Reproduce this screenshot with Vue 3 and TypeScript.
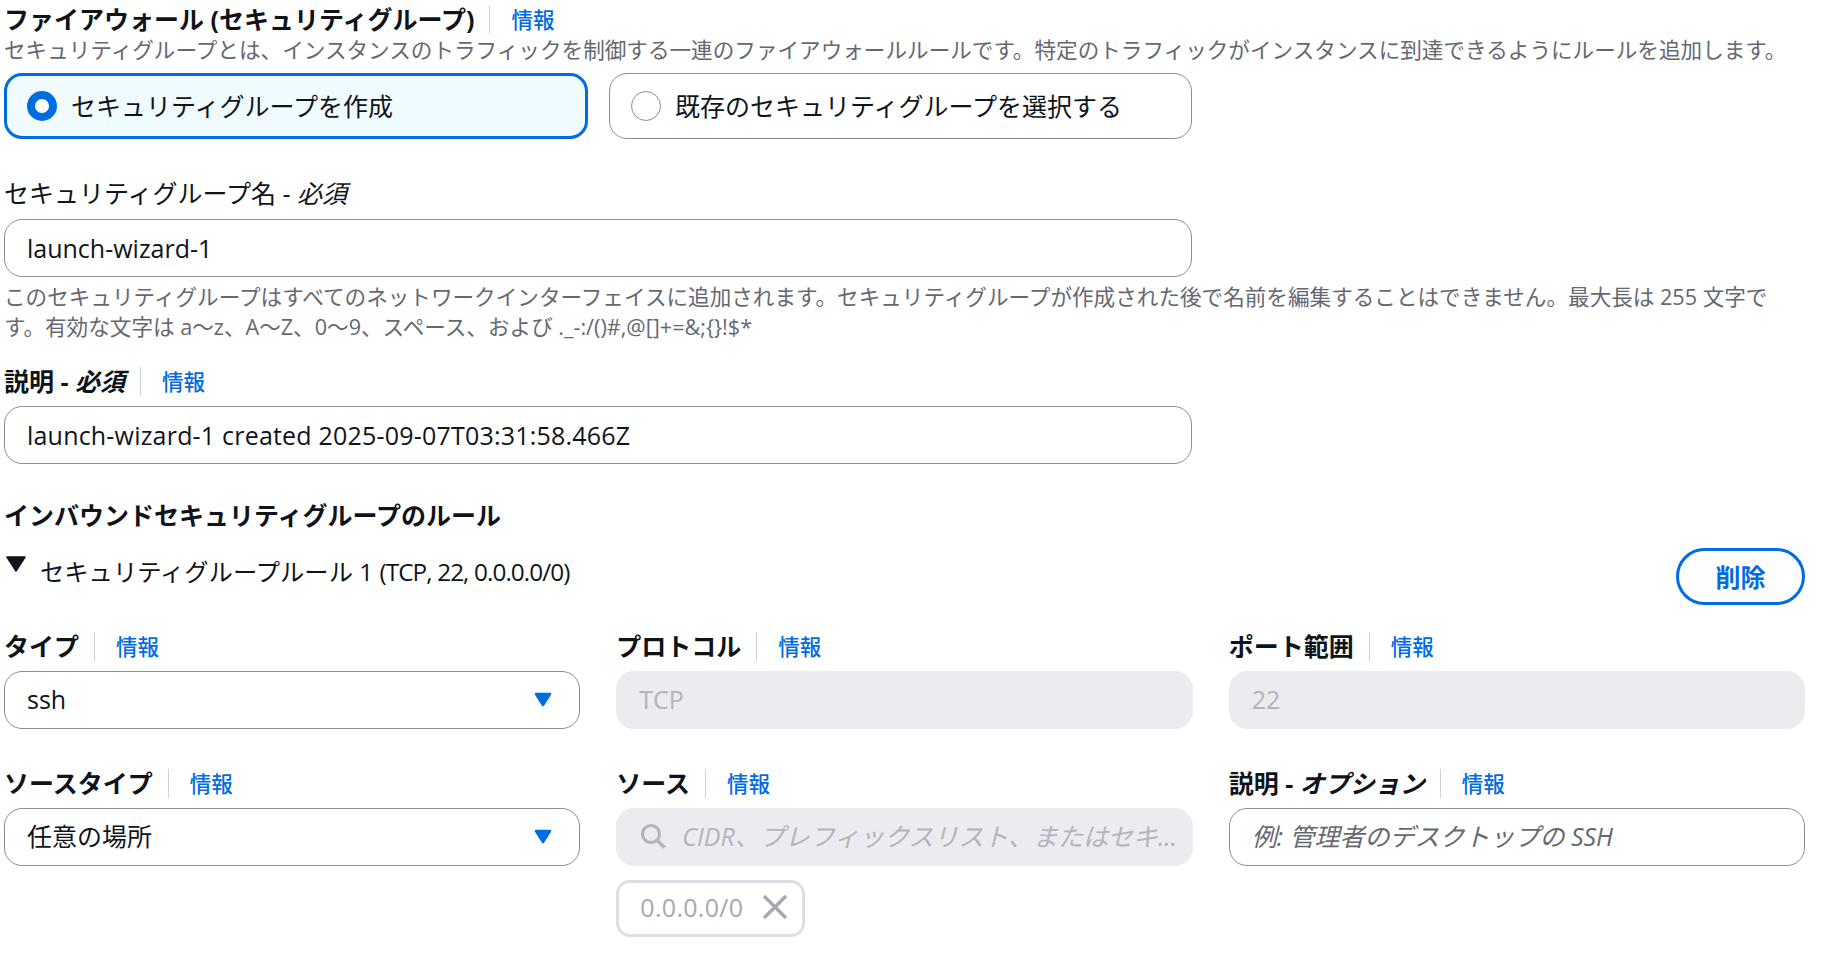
<script setup lang="ts">
const fieldsTop = [
  { label: 'タイプ', value: 'ssh', kind: 'select' },
  { label: 'プロトコル', value: 'TCP', kind: 'disabled' },
  { label: 'ポート範囲', value: '22', kind: 'disabled' }
]
</script>

<template>
  <main class="page">
    <div class="label-row top-row">
      <h2 class="title">ファイアウォール (セキュリティグループ)</h2>
      <span class="sep"></span>
      <a class="info">情報</a>
    </div>
    <p class="help one">セキュリティグループとは、インスタンスのトラフィックを制御する一連のファイアウォールルールです。特定のトラフィックがインスタンスに到達できるようにルールを追加します。</p>

    <div class="radios">
      <label class="radio checked"><span class="dot"></span>セキュリティグループを作成</label>
      <label class="radio"><span class="dot"></span>既存のセキュリティグループを選択する</label>
    </div>

    <div class="plain-label">セキュリティグループ名 - <i>必須</i></div>
    <div class="input wide">launch-wizard-1</div>
    <p class="help two">このセキュリティグループはすべてのネットワークインターフェイスに追加されます。セキュリティグループが作成された後で名前を編集することはできません。最大長は 255 文字です。有効な文字は a〜z、A〜Z、0〜9、スペース、および ._-:/()#,@[]+=&amp;;{}!$*</p>

    <div class="label-row desc-label">
      <span class="label">説明 - <i>必須</i></span>
      <span class="sep"></span>
      <a class="info">情報</a>
    </div>
    <div class="input wide created">launch-wizard-1 created 2025-09-07T03:31:58.466Z</div>

    <h3 class="heading">インバウンドセキュリティグループのルール</h3>

    <div class="rule-head">
      <div class="rule-title">
        <svg class="caret" viewBox="0 0 20 16" aria-hidden="true"><path d="M1 1h18l-9 14z" fill="#0f141a" stroke="#0f141a" stroke-width="1.5" stroke-linejoin="round" /></svg>
        <span>セキュリティグループルール 1 <span class="tight">(TCP, 22, 0.0.0.0/0)</span></span>
      </div>
      <button class="delete" type="button">削除</button>
    </div>

    <div class="grid">
      <div v-for="f in fieldsTop" :key="f.label" class="field">
        <div class="label-row">
          <span class="label">{{ f.label }}</span>
          <span class="sep"></span>
          <a class="info">情報</a>
        </div>
        <div class="input" :class="{ disabled: f.kind === 'disabled', select: f.kind === 'select' }">
          {{ f.value }}
          <svg v-if="f.kind === 'select'" class="arrow" viewBox="0 0 18 15" aria-hidden="true"><path d="M2 2h14l-7 11z" fill="#006ce0" stroke="#006ce0" stroke-width="2.5" stroke-linejoin="round" /></svg>
        </div>
      </div>

      <div class="field">
        <div class="label-row">
          <span class="label">ソースタイプ</span>
          <span class="sep"></span>
          <a class="info">情報</a>
        </div>
        <div class="input select">
          任意の場所
          <svg class="arrow" viewBox="0 0 18 15" aria-hidden="true"><path d="M2 2h14l-7 11z" fill="#006ce0" stroke="#006ce0" stroke-width="2.5" stroke-linejoin="round" /></svg>
        </div>
      </div>

      <div class="field">
        <div class="label-row">
          <span class="label">ソース</span>
          <span class="sep"></span>
          <a class="info">情報</a>
        </div>
        <div class="input disabled search">
          <svg class="glass" viewBox="0 0 26 26" aria-hidden="true"><circle cx="11" cy="11" r="8.5" fill="none" stroke="#b4b4bb" stroke-width="3.2" /><path d="M17 17l7.5 7.5" stroke="#b4b4bb" stroke-width="3.6" fill="none" /></svg>
          <span class="ph">CIDR、プレフィックスリスト、またはセキュリティグループ</span>
        </div>
        <div class="token">
          <span>0.0.0.0/0</span>
          <svg class="x" viewBox="0 0 26 26" aria-hidden="true"><path d="M2 2l22 22M24 2L2 24" stroke="#a8a8b0" stroke-width="3.4" fill="none" /></svg>
        </div>
      </div>

      <div class="field">
        <div class="label-row">
          <span class="label">説明 - <i>オプション</i></span>
          <span class="sep"></span>
          <a class="info">情報</a>
        </div>
        <div class="input"><span class="ph dark">例: 管理者のデスクトップの SSH</span></div>
      </div>
    </div>
  </main>
</template>

<style scoped>
.page {
  box-sizing: border-box;
  width: 1828px;
  height: 956px;
  padding: 3px 23px 0 4px;
  overflow: hidden;
  background: #fff;
  color: #0f141a;
  font-family: "Open Sans", "Noto Sans CJK JP", sans-serif;
  font-size: 25px;
  line-height: 34px;
}
.wide { width: 1188px; }
.label-row {
  display: flex;
  align-items: center;
  height: 29px;
}
.top-row { height: 32px; }
.title {
  margin: 0;
  font-size: 25px;
  line-height: 34px;
  font-weight: 700;
}
.label { font-weight: 700; font-size: 25px; line-height: 29px; white-space: nowrap; }
.sep {
  width: 1px;
  height: 29px;
  margin: 0 21px 0 15px;
  background: #d1d1d8;
}
.info {
  color: #006ce0;
  font-size: 21.5px;
  font-weight: 500;
  line-height: 29px;
}
.help {
  margin: 0;
  color: #656871;
  font-size: 21.6px;
  line-height: 30px;
}
.help.one { white-space: nowrap; height: 38px; }
.help.two { margin-top: 5px; height: 61px; max-width: 1785px; }
.radios {
  display: grid;
  grid-template-columns: 584px 583px;
  gap: 21px;
}
.radio {
  box-sizing: border-box;
  display: flex;
  align-items: center;
  height: 66px;
  padding-left: 21px;
  border: 1.4px solid #8c8c94;
  border-radius: 18px;
  white-space: nowrap;
}
.radio.checked {
  padding-left: 20px;
  border: 3px solid #006ce0;
  background: #f0fbff;
}
.dot {
  box-sizing: border-box;
  flex: none;
  width: 30px;
  height: 30px;
  margin-right: 14px;
  border: 1.6px solid #8c8c94;
  border-radius: 50%;
  background: #fff;
}
.checked .dot { border: 8.5px solid #006ce0; }
.plain-label { margin-top: 37px; height: 43px; }
.input {
  box-sizing: border-box;
  display: flex;
  align-items: center;
  height: 58px;
  padding: 0 22px;
  border: 1.4px solid #8c8c94;
  border-radius: 18px;
  background: #fff;
  white-space: nowrap;
}
.created { letter-spacing: 0.2px; }
.desc-label { margin: 24px 0 10px; }
.heading {
  margin: 34px 0 0;
  font-size: 25px;
  line-height: 34px;
  font-weight: 700;
}
.rule-head {
  display: flex;
  justify-content: space-between;
  align-items: flex-start;
  margin-top: 16px;
}
.rule-title {
  display: flex;
  align-items: flex-start;
  gap: 14px;
  padding: 7px 0 0 2px;
  font-size: 24.3px;
}
.tight { letter-spacing: -0.9px; }
.caret { width: 20px; height: 16px; margin-top: 1px; flex: none; }
.delete {
  box-sizing: border-box;
  width: 129px;
  height: 57px;
  padding: 0;
  border: 3px solid #006ce0;
  border-radius: 29px;
  background: #fff;
  color: #006ce0;
  font: inherit;
  font-weight: 700;
}
.grid {
  display: grid;
  grid-template-columns: repeat(3, 1fr);
  gap: 0 36px;
  margin-top: 27px;
}
.field { min-width: 0; padding-bottom: 40px; }
.field:nth-child(n + 4) { padding-bottom: 0; }
.field .input { margin-top: 10px; padding-bottom: 2px; }
.disabled {
  border-color: #ebebf0;
  background: #ebebf0;
  color: #b4b4bb;
}
.select { justify-content: space-between; padding-right: 27px; }
.arrow { width: 18px; height: 15px; flex: none; }
.search { padding-left: 23px; padding-right: 8px; gap: 16px; }
.glass { width: 26px; height: 26px; flex: none; }
.ph {
  min-width: 0;
  overflow: hidden;
  text-overflow: ellipsis;
  font-style: italic;
  color: #b4b4bb;
}
.ph.dark { color: #656871; }
.token {
  box-sizing: border-box;
  display: inline-flex;
  align-items: center;
  gap: 19px;
  height: 57px;
  margin-top: 14px;
  padding: 0 14px 3px 21px;
  border: 3px solid #dedee3;
  border-radius: 14px;
  color: #a8a8b0;
  letter-spacing: 0.3px;
}
.x { width: 26px; height: 26px; flex: none; }
i { font-style: italic; }
</style>
